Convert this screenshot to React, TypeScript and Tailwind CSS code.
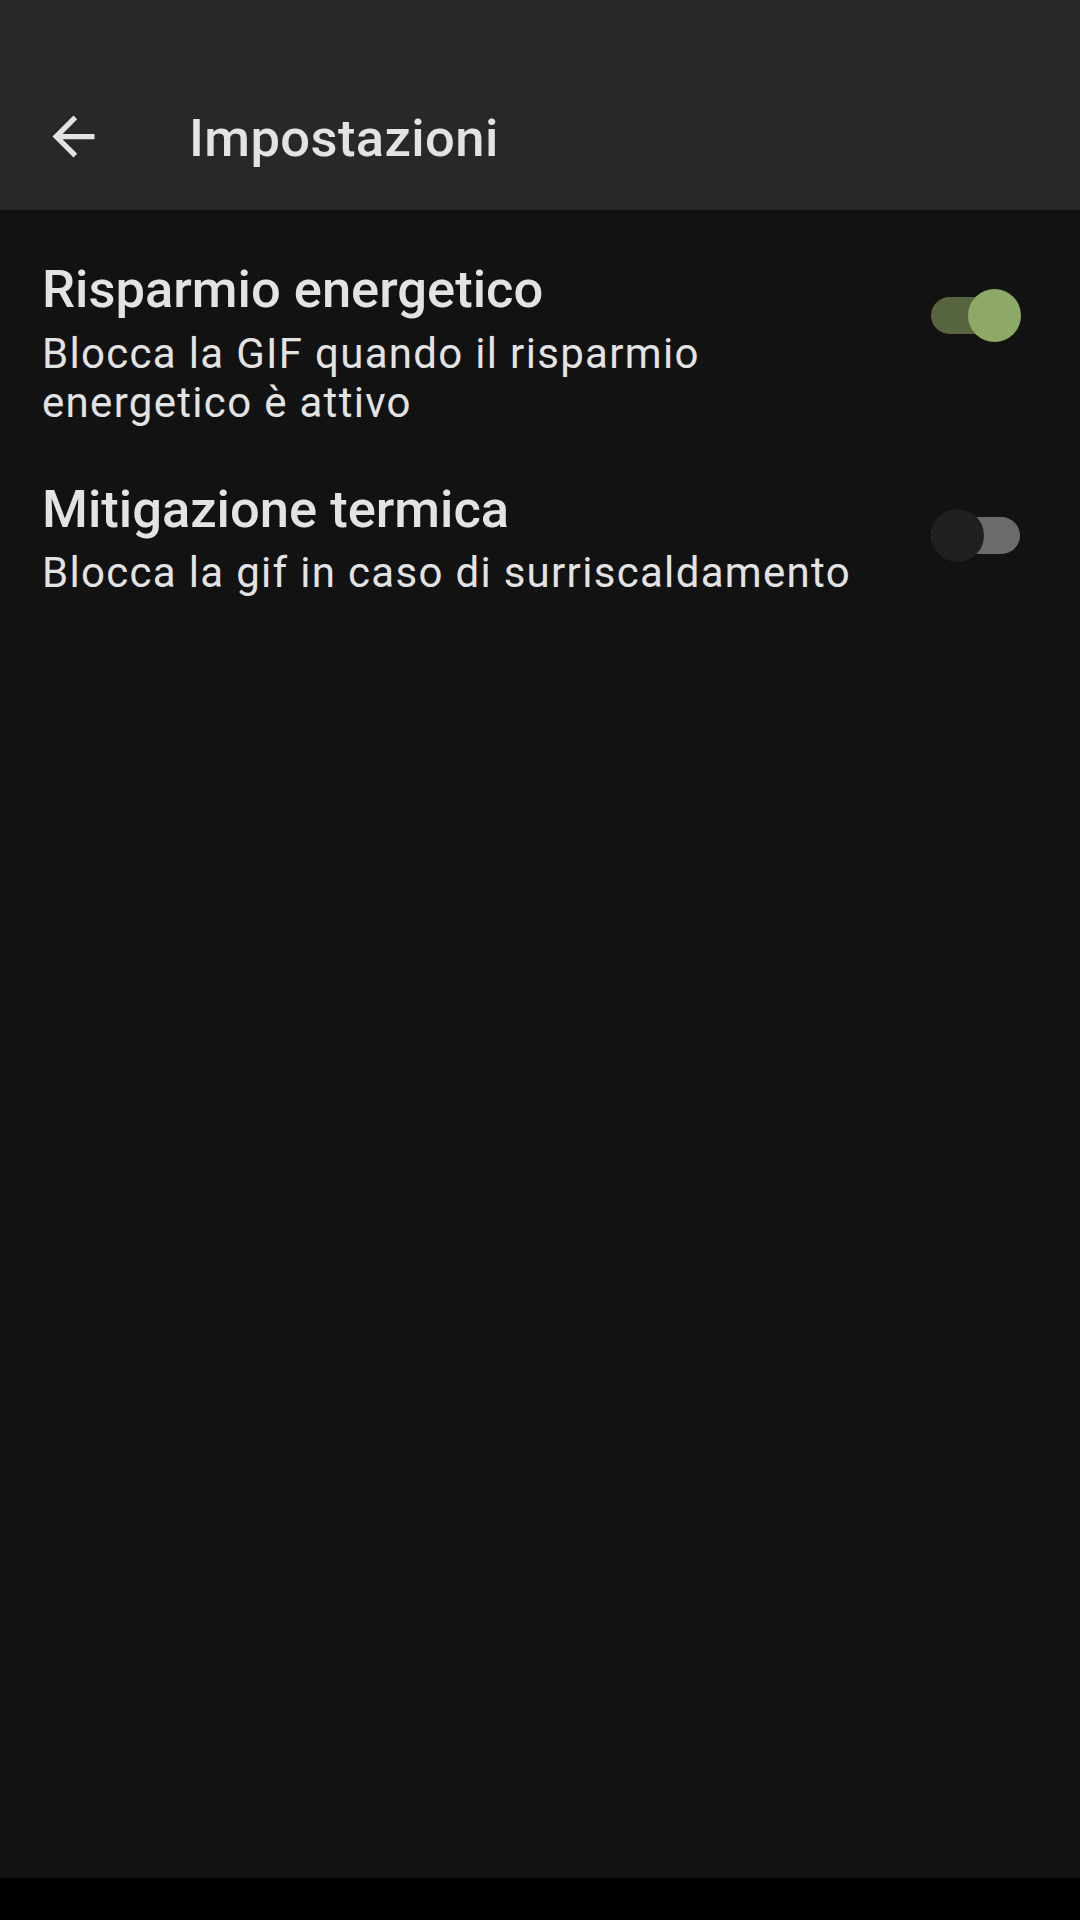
import { useState } from "react";

type Pref = {
  id: string;
  title: string;
  summary: string;
  checked: boolean;
};

const prefs: Pref[] = [
  {
    id: "battery",
    title: "Risparmio energetico",
    summary: "Blocca la GIF quando il risparmio energetico è attivo",
    checked: true,
  },
  {
    id: "thermal",
    title: "Mitigazione termica",
    summary: "Blocca la gif in caso di surriscaldamento",
    checked: false,
  },
];

function Toggle({ on, onClick }: { on: boolean; onClick: () => void }) {
  return (
    <button
      type="button"
      onClick={onClick}
      className="relative mt-[30px] ml-[30px] h-[53px] w-[90px] shrink-0"
    >
      <span
        className={
          on
            ? "absolute left-0 top-[8px] h-[37px] w-[89px] rounded-full bg-[#56653f]"
            : "absolute left-0 top-[8px] h-[37px] w-[89px] rounded-full bg-[#6b6b6b]"
        }
      />
      <span
        className={
          on
            ? "absolute right-0 top-0 h-[53px] w-[53px] rounded-full bg-[#8ea865]"
            : "absolute left-0 top-0 h-[53px] w-[53px] rounded-full bg-[#1f1f1f]"
        }
      />
    </button>
  );
}

export default function App() {
  const [values, setValues] = useState<Record<string, boolean>>({
    battery: true,
    thermal: false,
  });

  return (
    <div className="flex h-[1920px] w-[1080px] flex-col bg-[#121212] font-['Roboto',sans-serif] text-[#e3e3e3]">
      {/* app bar, status bar area included */}
      <header className="bg-[#282828] pt-[63px]">
        <div className="flex h-[147px] items-center">
          <button type="button" className="ml-[42px] h-[63px] w-[63px]">
            <svg viewBox="0 0 24 24" className="h-[63px] w-[63px]" fill="#e3e3e3">
              <path d="M20 11H7.83l5.59-5.59L12 4l-8 8 8 8 1.41-1.41L7.83 13H20v-2z" />
            </svg>
          </button>
          <h1 className="ml-[84px] pt-[4px] text-[52.5px] font-medium leading-[61.5px] tracking-[0.4px]">
            Impostazioni
          </h1>
        </div>
      </header>

      <main className="flex flex-1 flex-col gap-[52px] pt-[49px]">
        {prefs.map((p) => (
          <div key={p.id} className="flex items-start pl-[42px] pr-[59px]">
            <div className="flex-1">
              <h2 className="text-[52.5px] font-medium leading-[61.5px]">{p.title}</h2>
              <p className="mt-[8px] text-[42px] leading-[49px] tracking-[1.31px]">
                {p.summary}
              </p>
            </div>
            <Toggle
              on={values[p.id]}
              onClick={() => setValues({ ...values, [p.id]: !values[p.id] })}
            />
          </div>
        ))}
      </main>

      {/* nav bar */}
      <div className="h-[42px] bg-black" />
    </div>
  );
}
